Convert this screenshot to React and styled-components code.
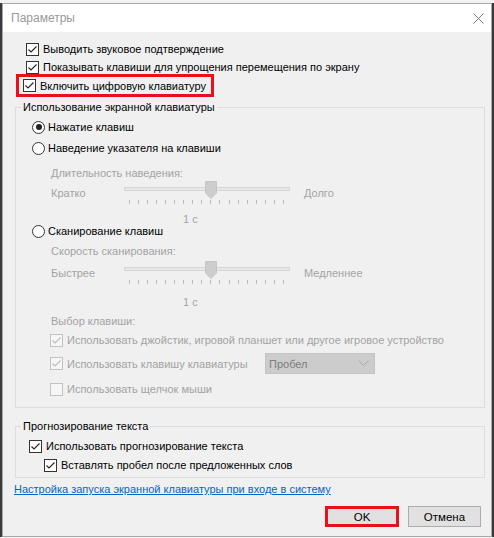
import React from 'react';
import styled, { createGlobalStyle } from 'styled-components';

const Global = createGlobalStyle`
  html, body {
    margin: 0;
    padding: 0;
  }
  body {
    background: linear-gradient(#f2f2f2 0 3px, #3a3a3a 3px);
    font-family: "Liberation Sans", Arial, sans-serif;
    font-size: 11px;
    color: #000;
  }
`

const Window = styled.div`
  width: 488px;
  height: 532px;
  margin: 3px 0 0 2px;
  border: 1px solid #a8a8a8;
  background: #f0f0f0;
  display: flex;
  flex-direction: column;
`

const TitleBar = styled.div`
  height: 28px;
  background: #fff;
  display: flex;
  align-items: center;
  justify-content: space-between;
  padding: 0 7px 0 8px;
  color: #999;
  font-size: 12px;
`

const Body = styled.div`
  flex: 1;
  display: flex;
  flex-direction: column;
  padding: 8px 6px 0 12px;
`

const TopChecks = styled.div`
  display: flex;
  flex-direction: column;
  padding-left: 11px;
`

const Row = styled.div`
  display: flex;
  align-items: center;
  height: ${p => p.$h || 18}px;
  margin-top: ${p => p.$mt || 0}px;
  padding-left: ${p => p.$indent || 0}px;
  color: ${p => (p.$dim ? '#a3a3a3' : '#000')};
  white-space: nowrap;
`

const Highlight = styled.div`
  display: flex;
  align-items: center;
  align-self: flex-start;
  height: 17px;
  margin: -2px 0 -3px -10px;
  padding: 0 5px 0 4px;
  border: 3px solid #e8101b;
`

const Group = styled.div`
  display: flex;
  flex-direction: column;
  border: 1px solid #dcdcdc;
  margin-top: ${p => p.$mt}px;
  padding-bottom: ${p => p.$pb}px;
`

const Legend = styled.div`
  align-self: flex-start;
  margin: -8px 0 0 5px;
  padding: 0 2px;
  line-height: 14px;
  height: 14px;
  background: #f0f0f0;
  white-space: nowrap;
`

const BoxEl = styled.span`
  width: 11px;
  height: 11px;
  flex: none;
  border: 1px solid ${p => (p.$dim ? '#c2c2c2' : '#333')};
  background: ${p => (p.$dim ? '#f6f6f6' : '#fff')};
  margin-right: 4px;
  display: flex;
  align-items: center;
  justify-content: center;
`

const RadioEl = styled.span`
  width: 11px;
  height: 11px;
  flex: none;
  border: 1px solid #333;
  border-radius: 50%;
  background: #fff;
  margin-right: 3px;
  display: flex;
  align-items: center;
  justify-content: center;
  &::after {
    content: '';
    width: 6px;
    height: 6px;
    border-radius: 50%;
    background: ${p => (p.$on ? '#222' : 'transparent')};
  }
`

const Check = ({ checked, dim }) => (
  <BoxEl $dim={dim}>
    {checked && (
      <svg width="11" height="11" viewBox="0 0 11 11">
        <polyline points="1.5,5.5 4,8 9.5,2.5" fill="none" stroke={dim ? '#bcbcbc' : '#222'} strokeWidth="1.1" />
      </svg>
    )}
  </BoxEl>
)

const SliderLabel = styled.div`
  width: 73px;
  line-height: 24px;
  height: 24px;
`

const SliderEnd = styled.div`
  margin-left: 14px;
  line-height: 24px;
  height: 24px;
`

const SliderBox = styled.div`
  position: relative;
  width: 166px;
  height: 24px;
`

const Track = styled.div`
  margin-top: 6px;
  height: 2px;
  border: 1px solid #d6d6d6;
  background: #e7e7e7;
`

const Ticks = styled.div`
  display: flex;
  justify-content: space-between;
  margin-top: 9px;
  padding: 0 6px 0 5px;
`

const Tick = styled.span`
  width: 1px;
  height: 4px;
  background: #b9b9b9;
`

const Thumb = styled.svg`
  position: absolute;
  left: 81px;
  top: 0;
`

const Slider = ({ from, to }) => (
  <>
    <SliderLabel>{from}</SliderLabel>
    <SliderBox>
      <Track />
      <Ticks>
        {Array.from({ length: 18 }).map((_, i) => <Tick key={i} />)}
      </Ticks>
      <Thumb width="12" height="18" viewBox="0 0 12 18">
        <path d="M0.5 0.5 H11.5 V12 L6 17.5 L0.5 12 Z" fill="#cdcdcd" stroke="#c6c6c6" />
      </Thumb>
    </SliderBox>
    <SliderEnd>{to}</SliderEnd>
  </>
)

const KeyLabel = styled.span`
  width: 198px;
`

const Combo = styled.div`
  width: 100px;
  height: 19px;
  border: 1px solid #c4c4c4;
  background: #cccccc;
  color: #7d7d7d;
  display: flex;
  align-items: center;
  justify-content: space-between;
  padding: 0 5px 0 3px;
`

const Link = styled.a`
  color: #0066cc;
  text-decoration: underline;
  line-height: 14px;
  margin-top: 4px;
  align-self: flex-start;
  margin-left: -1px;
  white-space: nowrap;
`

const Buttons = styled.div`
  display: flex;
  justify-content: flex-end;
  gap: 9px;
  margin: 10px 4px 0 0;
`

const Button = styled.div`
  width: ${p => (p.$hot ? 68 : 71)}px;
  height: ${p => (p.$hot ? 15 : 19)}px;
  border: ${p => (p.$hot ? '3px solid #e8101b' : '1px solid #adadad')};
  background: #e1e1e1;
  display: flex;
  align-items: center;
  justify-content: center;
  font-size: 11.5px;
`

export default function App() {
  return (
    <>
      <Global />
      <Window>
        <TitleBar>
          <span>Параметры</span>
          <svg width="11" height="11" viewBox="0 0 11 11">
            <path d="M0.5 0.5 L10.5 10.5 M10.5 0.5 L0.5 10.5" stroke="#7a7a7a" strokeWidth="1" />
          </svg>
        </TitleBar>
        <Body>
          <TopChecks>
            <Row><Check checked />Выводить звуковое подтверждение</Row>
            <Row><Check checked />Показывать клавиши для упрощения перемещения по экрану</Row>
            <Highlight><Check checked />Включить цифровую клавиатуру</Highlight>
          </TopChecks>

          <Group $mt={13} $pb={10}>
            <Legend>Использование экранной клавиатуры</Legend>
            <Row $h={20} $mt={3} $indent={16}><RadioEl $on />Нажатие клавиш</Row>
            <Row $h={20} $mt={1} $indent={16}><RadioEl />Наведение указателя на клавиши</Row>
            <Row $h={16} $mt={7} $indent={35} $dim>Длительность наведения:</Row>
            <Row $h={24} $indent={35} $dim>
              <Slider from="Кратко" to="Долго" />
            </Row>
            <Row $h={12} $mt={8} $indent={167} $dim>1 с</Row>
            <Row $h={12} $indent={16}><RadioEl />Сканирование клавиш</Row>
            <Row $h={16} $mt={6} $indent={35} $dim>Скорость сканирования:</Row>
            <Row $h={24} $mt={2} $indent={35} $dim>
              <Slider from="Быстрее" to="Медленнее" />
            </Row>
            <Row $h={12} $mt={11} $indent={167} $dim>1 с</Row>
            <Row $h={16} $mt={5} $indent={35} $dim>Выбор клавиши:</Row>
            <Row $h={16} $mt={3} $indent={34} $dim>
              <Check checked dim />Использовать джойстик, игровой планшет или другое игровое устройство
            </Row>
            <Row $h={21} $mt={5} $indent={34} $dim>
              <Check checked dim />
              <KeyLabel>Использовать клавишу клавиатуры</KeyLabel>
              <Combo>
                <span>Пробел</span>
                <svg width="11" height="7" viewBox="0 0 11 7">
                  <polyline points="0.5,0.5 5.5,5.5 10.5,0.5" fill="none" stroke="#a8a8a8" />
                </svg>
              </Combo>
            </Row>
            <Row $h={16} $mt={7} $indent={34} $dim>
              <Check dim />Использовать щелчок мыши
            </Row>
          </Group>

          <Group $mt={18} $pb={4}>
            <Legend>Прогнозирование текста</Legend>
            <Row $h={16} $mt={5} $indent={13}><Check checked />Использовать прогнозирование текста</Row>
            <Row $h={16} $mt={3} $indent={28}><Check checked />Вставлять пробел после предложенных слов</Row>
          </Group>

          <Link>Настройка запуска экранной клавиатуры при входе в систему</Link>

          <Buttons>
            <Button $hot>OK</Button>
            <Button>Отмена</Button>
          </Buttons>
        </Body>
      </Window>
    </>
  );
}
